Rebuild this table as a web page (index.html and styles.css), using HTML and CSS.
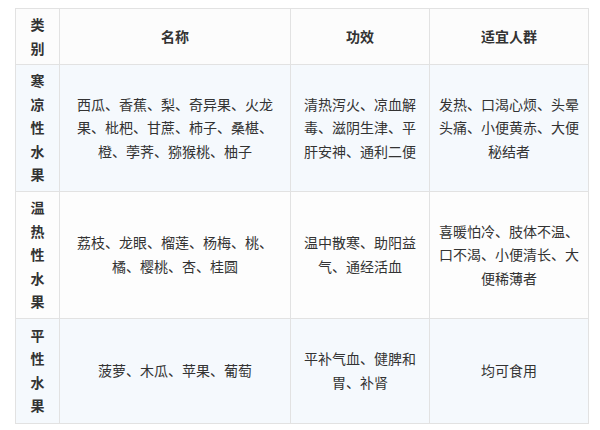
FILE: index.html
```html
<!DOCTYPE html>
<html lang="zh-CN">
<head>
<meta charset="utf-8">
<link rel="stylesheet" href="styles.css">
</head>
<body>
<table class="fruit-table">
  <colgroup>
    <col class="c-type">
    <col class="c-name">
    <col class="c-effect">
    <col class="c-people">
  </colgroup>
  <thead>
    <tr class="row-head">
      <th class="cat">类别</th>
      <th>名称</th>
      <th>功效</th>
      <th>适宜人群</th>
    </tr>
  </thead>
  <tbody>
    <tr class="row-1 tinted">
      <td class="cat">寒凉性水果</td>
      <td>西瓜、香蕉、梨、奇异果、火龙果、枇杷、甘蔗、柿子、桑椹、橙、荸荠、猕猴桃、柚子</td>
      <td>清热泻火、凉血解毒、滋阴生津、平肝安神、通利二便</td>
      <td>发热、口渴心烦、头晕头痛、小便黄赤、大便秘结者</td>
    </tr>
    <tr class="row-2">
      <td class="cat">温热性水果</td>
      <td>荔枝、龙眼、榴莲、杨梅、桃、橘、樱桃、杏、桂圆</td>
      <td>温中散寒、助阳益气、通经活血</td>
      <td>喜暖怕冷、肢体不温、口不渴、小便清长、大便稀薄者</td>
    </tr>
    <tr class="row-3 tinted">
      <td class="cat">平性水果</td>
      <td>菠萝、木瓜、苹果、葡萄</td>
      <td>平补气血、健脾和胃、补肾</td>
      <td>均可食用</td>
    </tr>
  </tbody>
</table>
</body>
</html>
```

FILE: styles.css
```css
html, body {
  background: #ffffff;
}
body {
  margin: 8px 0 0 15px;
  font-family: "Noto Sans CJK SC", "Noto Sans", sans-serif;
  font-size: 14px;
  color: #333333;
}
.fruit-table {
  border-collapse: collapse;
  table-layout: fixed;
  width: 574px;
}
.c-type { width: 44px; }
.c-name { width: 231px; }
.c-effect { width: 139px; }
.c-people { width: 159px; }

.fruit-table th,
.fruit-table td {
  border: 1px solid #e2e2e2;
  padding: 4px 9px;
  text-align: center;
  vertical-align: middle;
  line-height: 23.5px;
}
.fruit-table th {
  font-weight: bold;
  color: #333333;
}
.fruit-table .cat {
  font-weight: bold;
  padding: 4px 8px;
}
.row-head { height: 55px; background: #fcfcfc; }
.row-1 { height: 127px; }
.row-2 { height: 125px; background: #fdfdfd; }
.row-3 { height: 105px; }
.tinted { background: #f5f9fd; }
```
